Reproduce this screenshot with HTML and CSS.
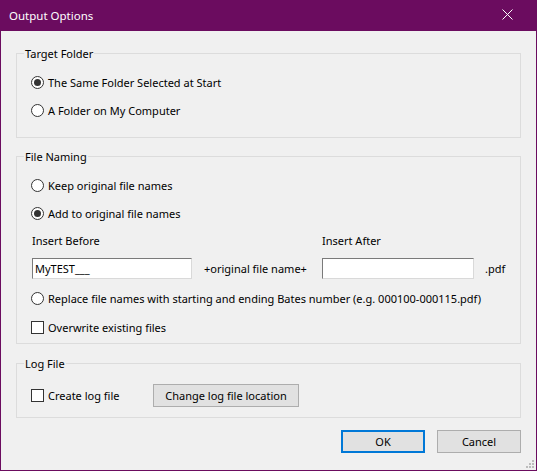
FILE: index.html
```html
<!DOCTYPE html>
<html>
<head>
<meta charset="utf-8">
<link rel="stylesheet" href="styles.css">
</head>
<body>
<div class="window">
  <div class="titlebar">
    <span class="title">Output Options</span>
    <svg class="close" width="11" height="11" viewBox="0 0 11 11"><path d="M0.5 0.5 L10.5 10.5 M10.5 0.5 L0.5 10.5" stroke="#fff" stroke-width="1" fill="none"/></svg>
  </div>
  <div class="content">
    <section class="group g1">
      <div class="group-title">Target Folder</div>
      <div class="group-body b1">
        <div class="row"><span class="radio on"></span><span>The Same Folder Selected at Start</span></div>
        <div class="row"><span class="radio"></span><span>A Folder on My Computer</span></div>
      </div>
    </section>
    <section class="group g2">
      <div class="group-title">File Naming</div>
      <div class="group-body b2">
        <div class="row"><span class="radio"></span><span>Keep original file names</span></div>
        <div class="row"><span class="radio on"></span><span>Add to original file names</span></div>
        <div class="insert-grid">
          <span class="lbl c1">Insert Before</span>
          <span class="lbl c3">Insert After</span>
          <div class="textbox c1 r2">MyTEST___</div>
          <span class="mid c2 r2">+original file name+</span>
          <div class="textbox c3 r2"></div>
          <span class="ext c4 r2">.pdf</span>
        </div>
        <div class="row replace"><span class="radio"></span><span>Replace file names with starting and ending Bates number (e.g. 000100-000115.pdf)</span></div>
        <div class="row overwrite"><span class="check"></span><span>Overwrite existing files</span></div>
      </div>
    </section>
    <section class="group g3">
      <div class="group-title">Log File</div>
      <div class="group-body b3">
        <div class="logrow">
          <div class="logcheck"><span class="check"></span><span>Create log file</span></div>
          <div class="btn wide">Change log file location</div>
        </div>
      </div>
    </section>
    <div class="actions">
      <div class="btn default">OK</div>
      <div class="btn">Cancel</div>
    </div>
  </div>
  <svg class="grip" width="8" height="8" viewBox="0 0 8 8">
    <rect x="6" y="0" width="2" height="2" fill="#bcbcbc"/>
    <rect x="3" y="3" width="2" height="2" fill="#bcbcbc"/>
    <rect x="6" y="3" width="2" height="2" fill="#bcbcbc"/>
    <rect x="0" y="6" width="2" height="2" fill="#bcbcbc"/>
    <rect x="3" y="6" width="2" height="2" fill="#bcbcbc"/>
    <rect x="6" y="6" width="2" height="2" fill="#bcbcbc"/>
  </svg>
</div>
</body>
</html>
```
FILE: styles.css
```css
* { box-sizing: border-box; }
html, body { margin: 0; padding: 0; }
body {
  font-family: "Noto Sans", "Open Sans", sans-serif;
  font-size: 11px;
  color: #000;
  background: #f0f0f0;
  white-space: nowrap;
}
.window {
  position: relative;
  width: 537px;
  height: 471px;
  border: 1px solid #6b0c5f;
  border-top: 0;
  background: #f0f0f0;
  overflow: hidden;
}
.titlebar {
  height: 31px;
  background: #6b0c5f;
  display: flex;
  align-items: center;
  justify-content: space-between;
  padding: 0 23px 1px 8px;
  color: #fff;
}
.title { line-height: 15px; font-size: 11.5px; }
.close { display: block; margin-top: -1px; }
.content { padding: 0 15px; }
.group {
  border: 1px solid #dcdcdc;
}
.g1 { margin-top: 22px; }
.g2 { margin-top: 18px; }
.g3 { margin-top: 19px; }
.group-title {
  width: fit-content;
  margin: -8px 0 0 7px;
  padding: 0 1px;
  line-height: 15px;
  background: #f0f0f0;
}
.group-body { padding-left: 14px; }
.b1 { padding-top: 7px; padding-bottom: 13px; }
.b2 { padding-top: 7px; padding-bottom: 2px; }
.b3 { padding-top: 13px; padding-bottom: 10px; }
.row {
  height: 28px;
  display: flex;
  align-items: center;
  gap: 4px;
}
.radio {
  width: 13px;
  height: 13px;
  border: 1px solid #333;
  border-radius: 50%;
  background: #fff;
  display: flex;
  align-items: center;
  justify-content: center;
  flex: none;
}
.radio.on::after {
  content: "";
  width: 7px;
  height: 7px;
  border-radius: 50%;
  background: #333;
}
.check {
  width: 13px;
  height: 13px;
  border: 1px solid #333;
  background: #fff;
  flex: none;
}
.insert-grid {
  display: grid;
  grid-template-columns: 160px 130px 152px auto;
  grid-template-rows: 26px 21px;
  row-gap: 5px;
  margin-left: 1px;
}
.c1 { grid-column: 1; }
.c2 { grid-column: 2; }
.c3 { grid-column: 3; }
.c4 { grid-column: 4; }
.r2 { grid-row: 2; }
.lbl { grid-row: 1; align-self: center; }
.textbox {
  background: #fff;
  border: 1px solid;
  border-color: #7a7a7a #d9d9d9 #d9d9d9 #7a7a7a;
  padding: 0 2px;
  line-height: 19px;
}
.mid { align-self: center; padding-left: 12px; }
.ext { align-self: center; padding-left: 11px; }
.replace { margin-top: 5px; }
.overwrite { margin-top: 1px; }
.logrow {
  display: flex;
  align-items: center;
  height: 23px;
}
.logcheck {
  display: flex;
  align-items: center;
  gap: 4px;
  width: 122px;
}
.btn {
  height: 23px;
  width: 84px;
  background: #e1e1e1;
  border: 1px solid #adadad;
  display: flex;
  align-items: center;
  justify-content: center;
}
.btn.wide { width: 146px; }
.btn.default { border: 2px solid #0078d7; }
.actions {
  display: flex;
  justify-content: flex-end;
  gap: 12px;
  margin-top: 12px;
}
.grip {
  position: absolute;
  right: 2px;
  bottom: 2px;
}
```
